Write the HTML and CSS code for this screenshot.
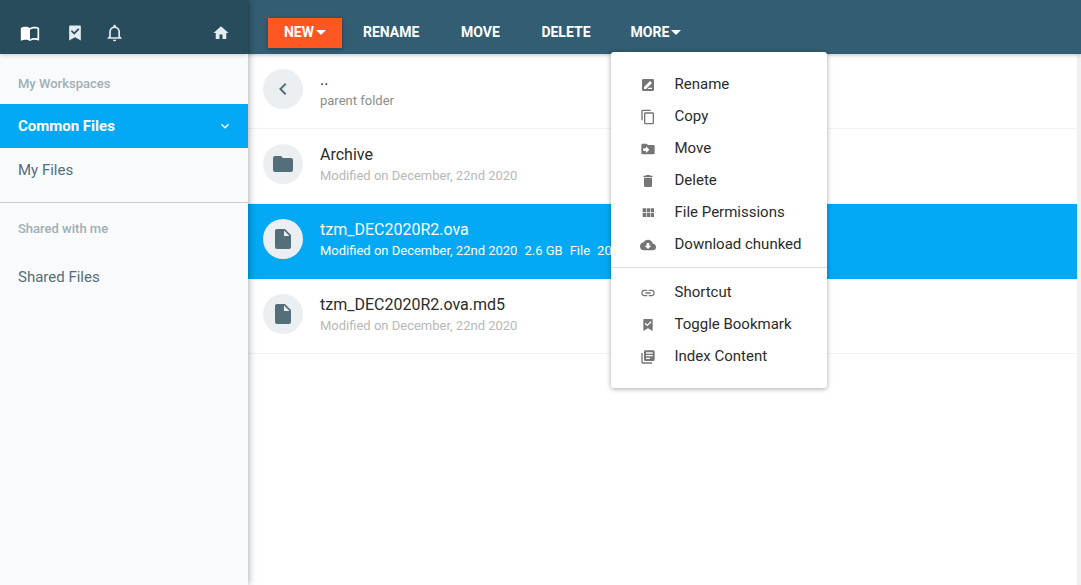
FILE: index.html
```
<!DOCTYPE html>
<html lang="en">
<head>
  <meta charset="UTF-8" />
  <title>Common Files</title>
  <meta name="viewport" content="width=device-width, initial-scale=1.0" />
  <link rel="stylesheet" href="styles.css">
</head>
<body>

  <!-- Left panel: shortcuts and workspaces -->
  <aside class="sidebar">
    <div class="sidebar-header">
      <button class="icon-button active" aria-label="Workspaces">
        <svg viewBox="0 0 24 24"><path d="M21,5C19.89,4.65 18.67,4.5 17.5,4.5C15.55,4.5 13.45,4.9 12,6C10.55,4.9 8.45,4.5 6.5,4.5C4.55,4.5 2.45,4.9 1,6V20.65C1,20.9 1.25,21.15 1.5,21.15C1.6,21.15 1.65,21.1 1.75,21.1C3.1,20.45 5.05,20 6.5,20C8.45,20 10.55,20.4 12,21.5C13.35,20.65 15.8,20 17.5,20C19.15,20 20.85,20.3 22.25,21.05C22.35,21.1 22.4,21.1 22.5,21.1C22.75,21.1 23,20.85 23,20.6V6C22.4,5.55 21.75,5.25 21,5M21,18.5C19.9,18.15 18.7,18 17.5,18C15.8,18 13.35,18.65 12,19.5V8C13.35,7.15 15.8,6.5 17.5,6.5C18.7,6.5 19.9,6.65 21,7V18.5Z"/></svg>
      </button>
      <button class="icon-button" aria-label="Bookmarks">
        <svg viewBox="0 0 24 24"><path d="M18,3A1,1 0 0,1 19,4V21L12,17L5,21V4A1,1 0 0,1 6,3H18M11,14L17.25,7.76L15.84,6.34L11,11.18L8.41,8.6L7,10L11,14Z"/></svg>
      </button>
      <button class="icon-button" aria-label="Notifications">
        <svg viewBox="0 0 24 24"><path d="M16,17H7V10.5C7,8 9,6 11.5,6C14,6 16,8 16,10.5M18,16V10.5C18,7.43 15.86,4.86 13,4.18V3.5A1.5,1.5 0 0,0 11.5,2A1.5,1.5 0 0,0 10,3.5V4.18C7.13,4.86 5,7.43 5,10.5V16L3,18V19H20V18M11.5,22A2,2 0 0,0 13.5,20H9.5A2,2 0 0,0 11.5,22Z"/></svg>
      </button>
      <button class="icon-button home" aria-label="Home">
        <svg viewBox="0 0 24 24"><path d="M10,20V14H14V20H19V12H22L12,3L2,12H5V20H10Z"/></svg>
      </button>
    </div>

    <nav class="workspaces">
      <h2>My Workspaces</h2>
      <a class="workspace selected" href="#common">
        Common Files
        <svg viewBox="0 0 24 24"><path d="M7.41,8.58L12,13.17L16.59,8.58L18,10L12,16L6,10L7.41,8.58Z"/></svg>
      </a>
      <a class="workspace" href="#my">My Files</a>
      <hr>
      <h2>Shared with me</h2>
      <a class="workspace shared" href="#shared">Shared Files</a>
    </nav>
  </aside>

  <main class="content">
    <div class="toolbar">
      <button class="tool new">New <span class="caret"></span></button>
      <button class="tool">Rename</button>
      <button class="tool">Move</button>
      <button class="tool">Delete</button>
      <div class="more">
        <button class="tool" aria-expanded="true">More <span class="caret"></span></button>
        <div class="menu">
          <button class="menu-item">
            <svg viewBox="0 0 24 24"><path fill-rule="evenodd" d="M5,3H19A2,2 0 0,1 21,5V19A2,2 0 0,1 19,21H5A2,2 0 0,1 3,19V5A2,2 0 0,1 5,3M6,18L9,18L18,9L15,6L6,15V18M18,18V16H13L11,18H18Z"/></svg>
            Rename
          </button>
          <button class="menu-item">
            <svg viewBox="0 0 24 24"><path d="M19,21H8V7H19M19,5H8A2,2 0 0,0 6,7V21A2,2 0 0,0 8,23H19A2,2 0 0,0 21,21V7A2,2 0 0,0 19,5M16,1H4A2,2 0 0,0 2,3V17H4V3H16V1Z"/></svg>
            Copy
          </button>
          <button class="menu-item">
            <svg viewBox="0 0 24 24"><path fill-rule="evenodd" d="M9,18V15H5V11H9V8L14,13M20,6H12L10,4H4C2.89,4 2,4.89 2,6V18A2,2 0 0,0 4,20H20A2,2 0 0,0 22,18V8C22,6.89 21.1,6 20,6Z"/></svg>
            Move
          </button>
          <button class="menu-item">
            <svg viewBox="0 0 24 24"><path d="M19,4H15.5L14.5,3H9.5L8.5,4H5V6H19M6,19A2,2 0 0,0 8,21H16A2,2 0 0,0 18,19V7H6V19Z"/></svg>
            Delete
          </button>
          <button class="menu-item">
            <svg viewBox="0 0 24 24"><path d="M16,5V11H21V5M10,11H15V5H10M16,18H21V12H16M10,18H15V12H10M4,18H9V12H4M4,11H9V5H4V11Z"/></svg>
            File Permissions
          </button>
          <button class="menu-item">
            <svg viewBox="0 0 24 24"><path fill-rule="evenodd" d="M17,13L12,18L7,13H10V9H14V13M19.35,10.03C18.67,6.59 15.64,4 12,4C9.11,4 6.6,5.64 5.35,8.03C2.34,8.36 0,10.9 0,14A6,6 0 0,0 6,20H19A5,5 0 0,0 24,15C24,12.36 21.95,10.22 19.35,10.03Z"/></svg>
            Download chunked
          </button>
          <hr>
          <button class="menu-item">
            <svg viewBox="0 0 24 24"><path d="M3.9,12C3.9,10.29 5.29,8.9 7,8.9H11V7H7A5,5 0 0,0 2,12A5,5 0 0,0 7,17H11V15.1H7C5.29,15.1 3.9,13.71 3.9,12M8,13H16V11H8V13M17,7H13V8.9H17C18.71,8.9 20.1,10.29 20.1,12C20.1,13.71 18.71,15.1 17,15.1H13V17H17A5,5 0 0,0 22,12A5,5 0 0,0 17,7Z"/></svg>
            Shortcut
          </button>
          <button class="menu-item">
            <svg viewBox="0 0 24 24"><path d="M18,3A1,1 0 0,1 19,4V21L12,17L5,21V4A1,1 0 0,1 6,3H18M11,14L17.25,7.76L15.84,6.34L11,11.18L8.41,8.6L7,10L11,14Z"/></svg>
            Toggle Bookmark
          </button>
          <button class="menu-item">
            <svg viewBox="0 0 24 24"><path fill-rule="evenodd" d="M19,7H9V5H19M15,15H9V13H15M19,11H9V9H19M20,2H8A2,2 0 0,0 6,4V16A2,2 0 0,0 8,18H20A2,2 0 0,0 22,16V4A2,2 0 0,0 20,2M4,6H2V20A2,2 0 0,0 4,22H18V20H4V6Z"/></svg>
            Index Content
          </button>
        </div>
      </div>
    </div>

    <ul class="files">
      <li class="file parent">
        <span class="file-icon"><svg viewBox="0 0 24 24"><path d="M15.41,16.58L10.83,12L15.41,7.41L14,6L8,12L14,18L15.41,16.58Z"/></svg></span>
        <div class="file-text">
          <div class="file-name">..</div>
          <div class="file-info">parent folder</div>
        </div>
      </li>
      <li class="file">
        <span class="file-icon"><svg viewBox="0 0 24 24"><path d="M10,4H4C2.89,4 2,4.89 2,6V18A2,2 0 0,0 4,20H20A2,2 0 0,0 22,18V8C22,6.89 21.1,6 20,6H12L10,4Z"/></svg></span>
        <div class="file-text">
          <div class="file-name">Archive</div>
          <div class="file-info">Modified on December, 22nd 2020</div>
        </div>
      </li>
      <li class="file selected">
        <span class="file-icon"><svg viewBox="0 0 24 24"><path d="M13,9V3.5L18.5,9M6,2C4.89,2 4,2.89 4,4V20A2,2 0 0,0 6,22H18A2,2 0 0,0 20,20V8L14,2H6Z"/></svg></span>
        <div class="file-text">
          <div class="file-name">tzm_DEC2020R2.ova</div>
          <div class="file-info"><span>Modified on December, 22nd 2020</span><span>2.6 GB</span><span>File</span><span>20</span></div>
        </div>
      </li>
      <li class="file">
        <span class="file-icon"><svg viewBox="0 0 24 24"><path d="M13,9V3.5L18.5,9M6,2C4.89,2 4,2.89 4,4V20A2,2 0 0,0 6,22H18A2,2 0 0,0 20,20V8L14,2H6Z"/></svg></span>
        <div class="file-text">
          <div class="file-name">tzm_DEC2020R2.ova.md5</div>
          <div class="file-info">Modified on December, 22nd 2020</div>
        </div>
      </li>
    </ul>
  </main>

</body>
</html>
```
FILE: styles.css
```
* {
  box-sizing: border-box;
}

body {
  margin: 0;
  min-height: 100vh;
  display: flex;
  font-family: Roboto, "Liberation Sans", sans-serif;
  font-size: 15px;
  color: #2b2b2b;
  background: #fff;
}

button {
  font: inherit;
  color: inherit;
  background: none;
  border: 0;
  padding: 0;
  cursor: pointer;
}

a {
  color: inherit;
  text-decoration: none;
}

svg {
  display: block;
  flex: none;
  fill: currentColor;
}

hr {
  margin: 0;
  border: 0;
  border-top: 1px solid #e0e0e0;
}

/* Sidebar */
.sidebar {
  flex: none;
  width: 248px;
  background: #f9fafc;
  box-shadow: 0 0 8px rgba(0, 0, 0, 0.4);
  z-index: 1;
}

.sidebar-header {
  display: flex;
  align-items: center;
  gap: 20px;
  height: 54px;
  padding: 12px 18px 0 20px;
  color: #e4ecf0;
  background: #294c5d;
  box-shadow: 0 1px 4px rgba(0, 0, 0, 0.2);
}

.icon-button svg {
  width: 20px;
  height: 20px;
}

.icon-button.active {
  color: #fff;
  margin-right: 5px;
}

.icon-button.home {
  margin-left: auto;
}

.icon-button.home svg {
  width: 18px;
  height: 18px;
}

.workspaces h2 {
  margin: 0;
  padding: 20px 18px 10px;
  font-size: 13px;
  line-height: 20px;
  font-weight: 500;
  color: #9fafb6;
}

.workspace {
  display: flex;
  align-items: center;
  justify-content: space-between;
  height: 44px;
  padding: 0 15px 0 18px;
  color: #546e7a;
}

.workspace svg {
  width: 16px;
  height: 16px;
}

.workspace.selected {
  font-weight: 700;
  color: #fff;
  background: #03a9f4;
}

.workspaces hr {
  margin-top: 10px;
  border-color: #cfcfcf;
}

.workspaces hr + h2 {
  padding-top: 16px;
}

.workspace.shared {
  height: 56px;
}

/* Toolbar */
.content {
  flex: 1;
  min-width: 0;
}

.toolbar {
  position: relative;
  display: flex;
  align-items: center;
  gap: 2px;
  height: 54px;
  padding: 12px 20px 0;
  background: #325d72;
  box-shadow: 0 1px 4px rgba(0, 0, 0, 0.25);
}

.tool {
  display: flex;
  align-items: center;
  justify-content: center;
  gap: 2px;
  height: 30px;
  min-width: 80px;
  padding: 0 19px 2px;
  font-size: 14px;
  font-weight: 700;
  text-transform: uppercase;
  color: #fff;
}

.tool.new {
  min-width: 74px;
  padding: 0 15px 2px;
  background: #ff5722;
  box-shadow: 0 1px 4px rgba(0, 0, 0, 0.3);
}

.caret {
  border: 5px solid transparent;
  border-top-color: #fff;
  border-bottom: 0;
}

.more {
  position: relative;
}

.menu {
  position: absolute;
  top: 34px;
  left: -1px;
  width: 216px;
  padding: 16px 0;
  background: #fff;
  border-radius: 3px;
  box-shadow: 0 1px 5px rgba(0, 0, 0, 0.35);
}

.menu-item {
  display: flex;
  align-items: center;
  gap: 19px;
  width: 100%;
  height: 32px;
  padding-left: 29px;
  white-space: nowrap;
}

.menu-item svg {
  width: 16px;
  height: 16px;
  margin-top: 2px;
  color: #757575;
}

.menu hr {
  margin: 7px 0 8px;
}

/* File list */
.files {
  margin: 0;
  padding: 0;
  list-style: none;
  min-height: calc(100vh - 54px);
  border-right: 4px solid #f1f1f1;
}

.file {
  display: flex;
  gap: 17px;
  height: 75px;
  padding: 15px 15px 0;
  border-bottom: 1px solid #f3f3f3;
}

.file-icon {
  display: flex;
  flex: none;
  align-items: center;
  justify-content: center;
  width: 40px;
  height: 40px;
  border-radius: 50%;
  color: #546e7a;
  background: #eceff1;
}

.file-icon svg {
  width: 24px;
  height: 24px;
}

.file-name {
  font-size: 16px;
  line-height: 22px;
}

.file-info {
  display: flex;
  gap: 7px;
  font-size: 13px;
  line-height: 20px;
  color: #b8b8b8;
}

.file.parent .file-info {
  color: #8c8c8c;
}

.file.selected {
  color: #fff;
  background: #03a9f4;
  border-color: #03a9f4;
}

.file.selected .file-info {
  color: #fff;
}
```
